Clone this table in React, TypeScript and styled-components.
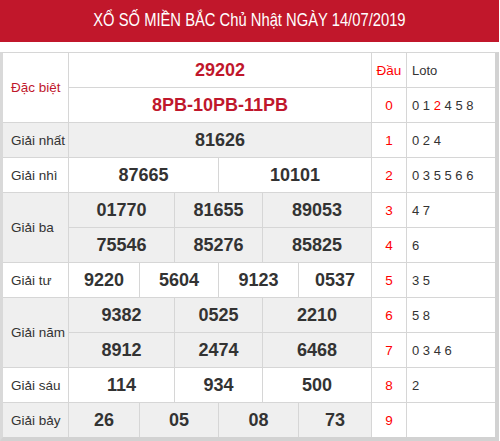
import React from "react";
import styled, { createGlobalStyle, css } from "styled-components";

const Global = createGlobalStyle`
  html, body { margin: 0; padding: 0; background: #ffffff; }
  body { font-family: "Liberation Sans", Arial, sans-serif; width: 500px; }
`;

const Wrap = styled.div`
  width: 499px;
`;

const Title = styled.h2`
  margin: 0 0 10px 0;
  height: 42px;
  line-height: 40px;
  background: #c1172b;
  color: #ffffff;
  font-size: 18px;
  font-weight: normal;
  text-align: center;
  white-space: nowrap;
`;

const TitleText = styled.span`
  display: inline-block;
  transform: scaleX(0.82);
`;

const Board = styled.div`
  display: grid;
  grid-template-columns: 65px 70px 34px 43px 43px 35px 72px 34px 88px;
  grid-auto-rows: 34px;
  gap: 1px;
  background: #d6d6d6;
  border-top: 1px solid #d6d6d6;
  border-left: 3px solid #d9d9d9;
  border-right: 4px solid #d2d2d2;
  border-bottom: 4px solid #d2d2d2;
`;

const cellBase = css<{ $grey?: boolean }>`
  background: ${(p) => (p.$grey ? "#efefef" : "#ffffff")};
  display: flex;
  align-items: center;
  min-width: 0;
`;

const Label = styled.div<{ $grey?: boolean; $rows?: number; $special?: boolean }>`
  ${cellBase};
  grid-column: 1;
  grid-row: span ${(p) => p.$rows ?? 1};
  padding-left: 8px;
  font-size: 13.5px;
  color: ${(p) => (p.$special ? "#c0172c" : "#333333")};
`;

const Num = styled.div<{ $grey?: boolean; $span: number; $special?: boolean }>`
  ${cellBase};
  grid-column: span ${(p) => p.$span};
  justify-content: center;
  font-size: 18px;
  font-weight: bold;
  color: ${(p) => (p.$special ? "#c0172c" : "#333333")};
`;

const Head = styled.div`
  ${cellBase};
  grid-column: 8;
  justify-content: center;
  font-size: 13.5px;
  color: #ff0000;
`;

const Loto = styled.div`
  ${cellBase};
  grid-column: 9;
  padding-left: 5px;
  font-size: 13px;
  color: #333333;
  white-space: pre;
`;

const Hit = styled.span`
  color: #ff0000;
`;

type Row = {
  label?: string;
  rows?: number;
  grey?: boolean;
  special?: boolean;
  nums: [string, number][];
  head: string;
  loto: React.ReactNode;
};

const data: Row[] = [
  { label: "Đặc biệt", rows: 2, special: true, nums: [["29202", 6]], head: "Đầu", loto: "Loto" },
  { special: true, nums: [["8PB-10PB-11PB", 6]], head: "0", loto: <>0 1 <Hit>2</Hit> 4 5 8</> },
  { label: "Giải nhất", grey: true, nums: [["81626", 6]], head: "1", loto: "0 2 4" },
  { label: "Giải nhì", nums: [["87665", 3], ["10101", 3]], head: "2", loto: "0 3 5 5 6 6" },
  { label: "Giải ba", rows: 2, grey: true, nums: [["01770", 2], ["81655", 2], ["89053", 2]], head: "3", loto: "4 7" },
  { grey: true, nums: [["75546", 2], ["85276", 2], ["85825", 2]], head: "4", loto: "6" },
  { label: "Giải tư", nums: [["9220", 1], ["5604", 2], ["9123", 2], ["0537", 1]], head: "5", loto: "3 5" },
  { label: "Giải năm", rows: 2, grey: true, nums: [["9382", 2], ["0525", 2], ["2210", 2]], head: "6", loto: "5 8" },
  { grey: true, nums: [["8912", 2], ["2474", 2], ["6468", 2]], head: "7", loto: "0 3 4 6" },
  { label: "Giải sáu", nums: [["114", 2], ["934", 2], ["500", 2]], head: "8", loto: "2" },
  { label: "Giải bảy", grey: true, nums: [["26", 1], ["05", 2], ["08", 2], ["73", 1]], head: "9", loto: "" },
];

export default function App() {
  return (
    <Wrap>
      <Global />
      <Title>
        <TitleText>XỔ SỐ MIỀN BẮC Chủ Nhật NGÀY 14/07/2019</TitleText>
      </Title>
      <Board>
        {data.map((r, i) => (
          <React.Fragment key={i}>
            {r.label && (
              <Label $rows={r.rows} $grey={r.grey} $special={r.special}>
                {r.label}
              </Label>
            )}
            {r.nums.map(([n, s], j) => (
              <Num key={j} $span={s} $grey={r.grey} $special={r.special}>
                {n}
              </Num>
            ))}
            <Head>{r.head}</Head>
            <Loto>{r.loto}</Loto>
          </React.Fragment>
        ))}
      </Board>
    </Wrap>
  );
}
